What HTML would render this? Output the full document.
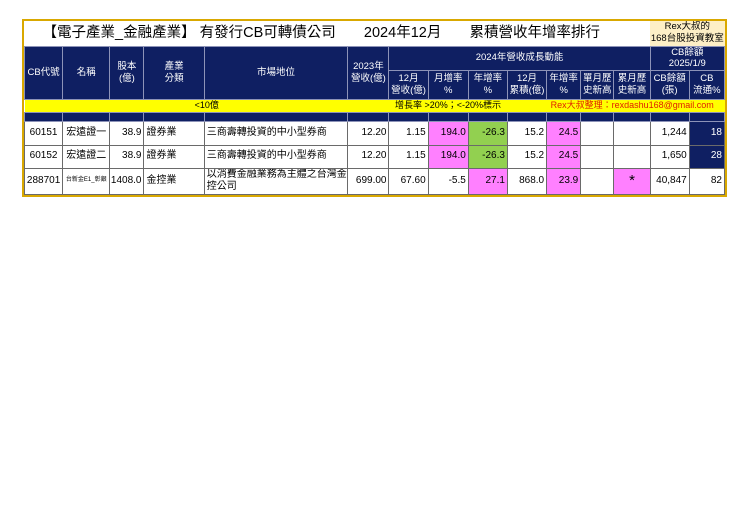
<!DOCTYPE html>
<html><head><meta charset="utf-8"><style>
body{margin:0;background:#fff;width:740px;height:523px;position:relative;font-family:"Liberation Sans","Noto Sans CJK TC",sans-serif}
.wrap{position:absolute;left:22px;top:19px;width:701px;border:2px solid #d9a800;background:#fff}
table{border-collapse:collapse;table-layout:fixed;width:701px}
td{padding:0;font-size:10px;color:#000;border:1px solid #6a6a6a;text-align:center;overflow:hidden;white-space:nowrap;line-height:1.25}
.h td,td.h{background:#0f1f62;color:#fff;border-color:#8d93b8;font-size:9.5px}
.y td{background:#ffff00;border:none;font-size:9px}
.d td{background:#0f1f62;border-color:#8d93b8}
.r{text-align:right;padding-right:2px}
.l{text-align:left;padding-left:2px}
.m{background:#ff80ff}
.g{background:#92d050}
.n{background:#0f1f62;color:#fff}
</style></head><body>
<div class="wrap">
<table>
<colgroup><col style="width:38px"><col style="width:47px"><col style="width:34px"><col style="width:60px"><col style="width:143px"><col style="width:41px"><col style="width:39px"><col style="width:40px"><col style="width:39px"><col style="width:39px"><col style="width:34px"><col style="width:33px"><col style="width:36px"><col style="width:39px"><col style="width:35px"></colgroup>
<tr style="height:25px"><td colspan="13" style="border:none;font-size:14.5px;text-align:left;padding-left:18px;white-space:pre">【電子產業_金融產業】 有發行CB可轉債公司       2024年12月       累積營收年增率排行</td><td colspan="2" style="background:#fdefc6;font-size:9.5px;line-height:12px;border:none">Rex大叔的<br>168台股投資教室</td></tr>
<tr class="h" style="height:22px"><td rowspan="2">CB代號</td><td rowspan="2">名稱</td><td rowspan="2">股本<br>(億)</td><td rowspan="2">產業<br>分類</td><td rowspan="2">市場地位</td><td rowspan="2">2023年<br>營收(億)</td><td colspan="7">2024年營收成長動能</td><td colspan="2">CB餘額<br>2025/1/9</td></tr>
<tr class="h" style="height:29px"><td>12月<br>營收(億)</td><td>月增率<br>%</td><td>年增率<br>%</td><td>12月<br>累積(億)</td><td>年增率<br>%</td><td>單月歷<br>史新高</td><td>累月歷<br>史新高</td><td>CB餘額<br>(張)</td><td>CB<br>流通%</td></tr>
<tr class="y" style="height:11px"><td colspan="6">&lt;10億</td><td colspan="4" style="text-align:left;padding-left:6px">增長率 &gt;20%；&lt;-20%標示</td><td colspan="5" style="color:#e02000;text-align:left;padding-left:4px">Rex大叔整理：rexdashu168@gmail.com</td></tr>
<tr class="d" style="height:9px"><td></td><td></td><td></td><td></td><td></td><td></td><td></td><td></td><td></td><td></td><td></td><td></td><td></td><td></td><td></td></tr>
<tr style="height:24px"><td>60151</td><td>宏遠證一</td><td class="r">38.9</td><td class="l">證券業</td><td class="l">三商壽轉投資的中小型券商</td><td class="r">12.20</td><td class="r">1.15</td><td class="r m">194.0</td><td class="r g">-26.3</td><td class="r">15.2</td><td class="r m">24.5</td><td></td><td></td><td class="r">1,244</td><td class="r n">18</td></tr>
<tr style="height:23px"><td>60152</td><td>宏遠證二</td><td class="r">38.9</td><td class="l">證券業</td><td class="l">三商壽轉投資的中小型券商</td><td class="r">12.20</td><td class="r">1.15</td><td class="r m">194.0</td><td class="r g">-26.3</td><td class="r">15.2</td><td class="r m">24.5</td><td></td><td></td><td class="r">1,650</td><td class="r n">28</td></tr>
<tr style="height:26px"><td>288701</td><td style="font-size:6px">台新金E1_彰銀</td><td class="r">1408.0</td><td class="l">金控業</td><td class="l" style="white-space:normal;line-height:12px">以消費金融業務為主體之台灣金控公司</td><td class="r">699.00</td><td class="r">67.60</td><td class="r">-5.5</td><td class="r m">27.1</td><td class="r">868.0</td><td class="r m">23.9</td><td></td><td class="m" style="font-size:15px">*</td><td class="r">40,847</td><td class="r">82</td></tr>
</table>
</div>
</body></html>
